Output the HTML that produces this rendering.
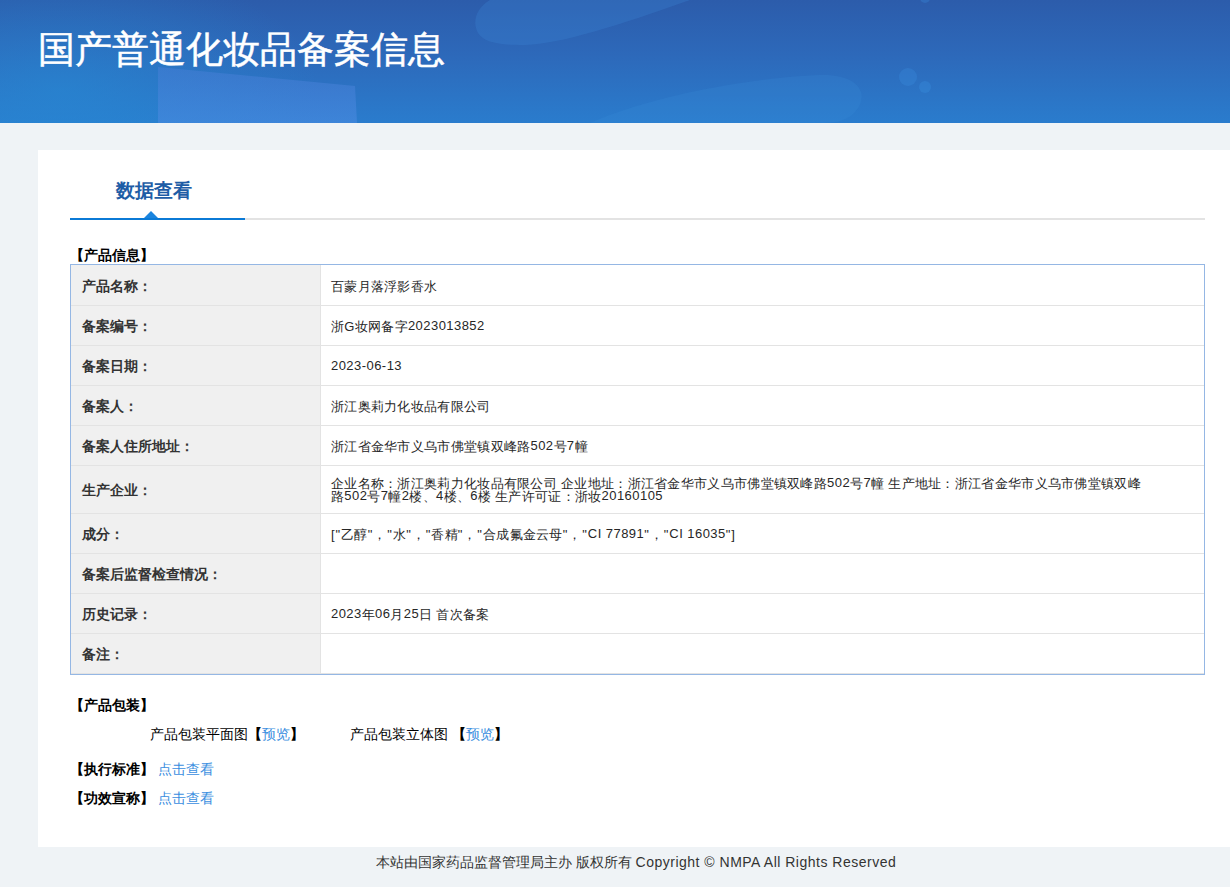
<!DOCTYPE html>
<html><head><meta charset="utf-8">
<style>
*{margin:0;padding:0;box-sizing:border-box}
html,body{width:1230px;height:887px;overflow:hidden}
body{background:#eff3f6;font-family:"Liberation Sans",sans-serif;position:relative;color:#333}
.hdr{position:absolute;left:0;top:0;width:1230px;height:123px;overflow:hidden;
 background:linear-gradient(180deg,#2c5cab 0%,#2d69ba 45%,#2a7ccd 100%)}
.hdr .glow{position:absolute;left:-200px;top:-40px;width:520px;height:260px;border-radius:50%;
 background:radial-gradient(closest-side,rgba(38,140,214,.55),rgba(38,140,214,0))}
.shape{position:absolute}
.title{position:absolute;left:38px;top:26px;font-size:37px;line-height:48px;color:#fff;white-space:nowrap;-webkit-text-stroke:.5px #fff}
.box{position:absolute;left:38px;top:150px;width:1200px;height:697px;background:#fff}
.abs{position:absolute;white-space:nowrap}
.tab{font-size:19px;font-weight:bold;color:#1e5da6;line-height:24px}
.sec{font-size:14px;font-weight:bold;color:#000;line-height:16px}
table{position:absolute;left:70px;top:264px;width:1135px;border:1px solid #95b7e4;border-collapse:separate;border-spacing:0;table-layout:fixed}
td{height:40px;border-bottom:1px solid #e3e3e3;color:#333;vertical-align:middle;white-space:nowrap}
td.l{width:250px;background:#f0f0f0;border-right:1px solid #e3e3e3;padding-left:11px;font-weight:bold;font-size:14px;color:#333}
td.v{padding-left:10px;padding-top:2px;font-size:13px;letter-spacing:.3px;color:#262626}
td.l{padding-top:2px}
tr.r1 td{height:41px;padding-top:3px}
td span.n{letter-spacing:.45px;position:relative;top:-1px}
td span.q{letter-spacing:.95px}
a{color:#3a8ee0;text-decoration:none}
.foot{position:absolute;left:-2px;top:851px;width:1276px;text-align:center;font-size:14px;color:#333;line-height:22px}
</style></head><body>
<div class="hdr">
 <div class="glow"></div>
 <svg width="1230" height="123" style="position:absolute;left:0;top:0">
  <defs>
   <linearGradient id="pg" x1="0" y1="0" x2="0" y2="1"><stop offset="0" stop-color="#4a7fd8" stop-opacity=".45"/><stop offset="1" stop-color="#4a8ae0" stop-opacity=".6"/></linearGradient>
  </defs>
  <path d="M158 67 L355 86 L357 123 L158 123 Z" fill="url(#pg)"/>
  <path d="M490 0 C476 8 472 22 478 33 C485 43 500 45 525 45 C560 44 620 25 690 0 Z" fill="#3d8ad6" fill-opacity=".28"/>
  <path d="M590 123 C640 100 740 78 820 75 C860 74 870 95 855 112 C845 123 830 123 820 123 Z" fill="#3a90dc" fill-opacity=".2"/>
  <circle cx="908" cy="77" r="9" fill="#3a8fe0" fill-opacity=".3"/>
  <circle cx="925" cy="87" r="6" fill="#3a8fe0" fill-opacity=".35"/>
  <circle cx="925" cy="-2" r="5" fill="#3a8fe0" fill-opacity=".3"/>
 </svg>
 <div class="title">国产普通化妆品备案信息</div>
</div>
<div class="box"></div>
<div class="abs tab" style="left:116px;top:179px">数据查看</div>
<div class="abs" style="left:70px;top:218px;width:175px;height:2px;background:#0b7ad6"></div>
<div class="abs" style="left:245px;top:218px;width:960px;height:2px;background:#e3e3e3"></div>
<div class="abs" style="left:144px;top:211px;width:0;height:0;border-left:7px solid transparent;border-right:7px solid transparent;border-bottom:7px solid #1a84de"></div>
<div class="abs sec" style="left:70px;top:247px">【产品信息】</div>
<table>
<colgroup><col style="width:250px"><col></colgroup>
<tr class="r1"><td class="l">产品名称：</td><td class="v">百蒙月落浮影香水</td></tr>
<tr><td class="l">备案编号：</td><td class="v">浙G妆网备字<span class="n">2023013852</span></td></tr>
<tr><td class="l">备案日期：</td><td class="v"><span class="n">2023-06-13</span></td></tr>
<tr><td class="l">备案人：</td><td class="v">浙江奥莉力化妆品有限公司</td></tr>
<tr><td class="l">备案人住所地址：</td><td class="v">浙江省金华市义乌市佛堂镇双峰路<span class="n">502</span>号<span class="n">7</span>幢</td></tr>
<tr><td class="l" style="height:48px">生产企业：</td><td class="v" style="line-height:12.5px">企业名称：浙江奥莉力化妆品有限公司 企业地址：浙江省金华市义乌市佛堂镇双峰路<span class="n">502</span>号<span class="n">7</span>幢 生产地址：浙江省金华市义乌市佛堂镇双峰<br>路<span class="n">502</span>号<span class="n">7</span>幢<span class="n">2</span>楼、<span class="n">4</span>楼、<span class="n">6</span>楼 生产许可证：浙妆<span class="n">20160105</span></td></tr>
<tr><td class="l">成分：</td><td class="v"><span class="q">["</span>乙醇<span class="q">"，"</span>水<span class="q">"，"</span>香精<span class="q">"，"</span>合成氟金云母<span class="q">"，"</span><span class="n">CI 77891</span><span class="q">"，"</span><span class="n">CI 16035</span><span class="q">"]</span></td></tr>
<tr><td class="l">备案后监督检查情况：</td><td class="v"></td></tr>
<tr><td class="l">历史记录：</td><td class="v"><span class="n">2023</span>年<span class="n">06</span>月<span class="n">25</span>日 首次备案</td></tr>
<tr><td class="l">备注：</td><td class="v"></td></tr>
</table>
<div class="abs sec" style="left:70px;top:697px">【产品包装】</div>
<div class="abs" style="left:150px;top:726px;font-size:14px;color:#000;line-height:16px">产品包装平面图<b>【</b><a>预览</a><b>】</b></div>
<div class="abs" style="left:350px;top:726px;font-size:14px;color:#000;line-height:16px">产品包装立体图 <b>【</b><a>预览</a><b>】</b></div>
<div class="abs sec" style="left:70px;top:761px">【执行标准】 <a style="font-weight:normal">点击查看</a></div>
<div class="abs sec" style="left:70px;top:790px">【功效宣称】 <a style="font-weight:normal">点击查看</a></div>
<div class="foot">本站由国家药品监督管理局主办 版权所有 <span style="letter-spacing:.5px">Copyright © NMPA All Rights Reserved</span></div>
</body></html>
